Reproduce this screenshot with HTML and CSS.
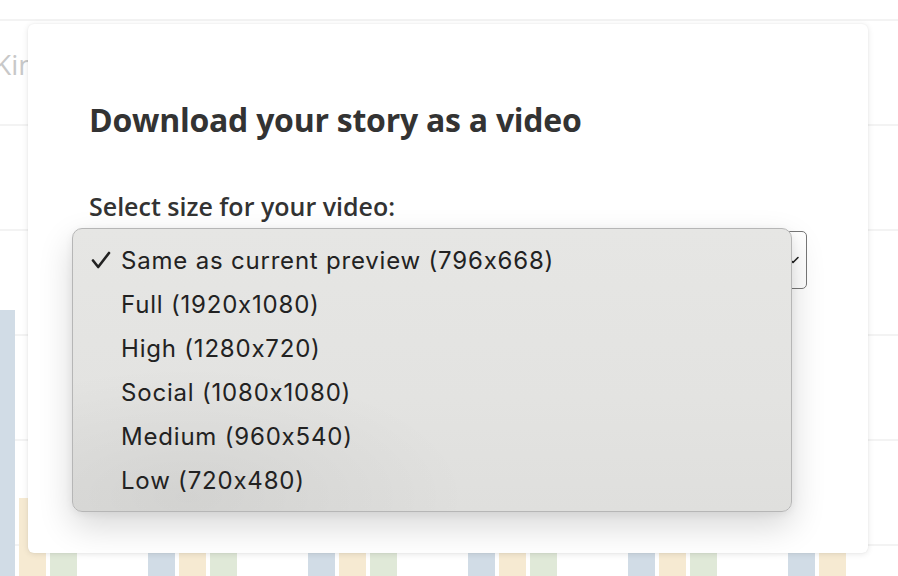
FILE: index.html
```html
<!DOCTYPE html>
<html>
<head>
<meta charset="utf-8">
<link rel="stylesheet" href="styles.css">
</head>
<body>
<div class="backdrop">
  <div class="grid">
    <div class="gline"></div><div class="gline"></div><div class="gline"></div><div class="gline"></div><div class="gline"></div><div class="gline"></div>
  </div>
  <div class="kin">Kingdom</div>
  <div class="bars">
    <div class="group"><div class="bar blue tall"></div><div class="bar yellow mid"></div><div class="bar green"></div></div>
    <div class="group"><div class="bar blue"></div><div class="bar yellow"></div><div class="bar green"></div></div>
    <div class="group"><div class="bar blue"></div><div class="bar yellow"></div><div class="bar green"></div></div>
    <div class="group"><div class="bar blue"></div><div class="bar yellow"></div><div class="bar green"></div></div>
    <div class="group"><div class="bar blue"></div><div class="bar yellow"></div><div class="bar green"></div></div>
    <div class="group"><div class="bar blue"></div><div class="bar yellow"></div></div>
  </div>
</div>

<div class="modal">
  <h1 class="title">Download your story as a video</h1>
  <div class="label">Select size for your video:</div>
  <div class="select">
    <svg class="chev" width="14" height="14" viewBox="0 0 14 14"><path d="M2 4.5 L7 9.5 L12 4.5" fill="none" stroke="#222" stroke-width="1.6" stroke-linecap="round" stroke-linejoin="round"/></svg>
  </div>
  <div class="menu">
    <div class="item"><span class="check"><svg width="20" height="18" viewBox="0 0 20 18"><path d="M2 9.5 L7.2 16 L18 2" fill="none" stroke="#222" stroke-width="2.6" stroke-linecap="round" stroke-linejoin="round"/></svg></span>Same as current preview (796x668)</div>
    <div class="item"><span class="check"></span>Full (1920x1080)</div>
    <div class="item"><span class="check"></span>High (1280x720)</div>
    <div class="item"><span class="check"></span>Social (1080x1080)</div>
    <div class="item"><span class="check"></span>Medium (960x540)</div>
    <div class="item"><span class="check"></span>Low (720x480)</div>
  </div>
</div>
</body>
</html>
```

FILE: styles.css
```css
html, body {
  margin: 0;
  padding: 0;
  width: 898px;
  height: 576px;
  overflow: hidden;
  background: #fff;
}
body {
  position: relative;
  font-family: "Open Sans", "Noto Sans", sans-serif;
}
.backdrop {
  position: absolute;
  inset: 0;
}
.grid {
  display: flex;
  flex-direction: column;
  padding-top: 19px;
  gap: 103px;
}
.gline {
  height: 2px;
  background: #f3f3f3;
}
.kin {
  position: absolute;
  left: -6px;
  top: 44px;
  font-size: 28px;
  line-height: 40px;
  color: #c8c8c8;
  white-space: nowrap;
}
.bars {
  position: absolute;
  left: -12px;
  bottom: 0;
  display: flex;
  align-items: flex-end;
}
.group {
  width: 160px;
  display: flex;
  align-items: flex-end;
  gap: 4px;
}
.bar {
  width: 27px;
  height: 40px;
}
.bar.tall { height: 266px; }
.bar.mid { height: 78px; }
.blue { background: #d1dce6; }
.yellow { background: #f6ead2; }
.green { background: #e0e9d8; }

.modal {
  position: absolute;
  left: 28px;
  top: 24px;
  width: 840px;
  height: 529px;
  box-sizing: border-box;
  background: #fff;
  border-radius: 6px;
  box-shadow: 0 1px 6px rgba(0,0,0,0.10), 0 0 2px rgba(0,0,0,0.06);
  padding: 73px 61px 0 61px;
  color: #333;
}
.title {
  margin: 0;
  font-size: 32px;
  font-weight: 700;
  line-height: 46px;
  letter-spacing: -0.25px;
}
.label {
  margin-top: 48px;
  font-size: 25px;
  font-weight: 600;
  line-height: 30px;
}
.select {
  margin-top: 10px;
  height: 58px;
  box-sizing: border-box;
  border: 1.5px solid #777;
  border-radius: 5px;
  display: flex;
  align-items: center;
  justify-content: flex-end;
  padding-right: 6px;
}
.chev { display: block; }

.menu {
  position: absolute;
  left: 44px;
  top: 204px;
  width: 720px;
  height: 284px;
  box-sizing: border-box;
  padding-top: 9px;
  border-radius: 10px;
  border: 1px solid #b6b6b6;
  background:
    radial-gradient(ellipse 280px 130px at 16% 95%, rgba(0,0,0,0.06), rgba(0,0,0,0) 100%),
    linear-gradient(180deg, #e6e6e4 0%, #e3e3e1 60%, #dfdfdd 100%);
  box-shadow: 0 14px 34px rgba(0,0,0,0.16), 0 2px 8px rgba(0,0,0,0.06);
  font-family: "Inter", "Roboto", sans-serif;
  font-size: 24px;
  color: #222;
}
.item {
  height: 44px;
  display: flex;
  align-items: center;
  letter-spacing: 0.8px;
}
.check {
  width: 48px;
  box-sizing: border-box;
  padding-left: 18px;
  display: flex;
  align-items: center;
}
.check svg { display: block; }
```
